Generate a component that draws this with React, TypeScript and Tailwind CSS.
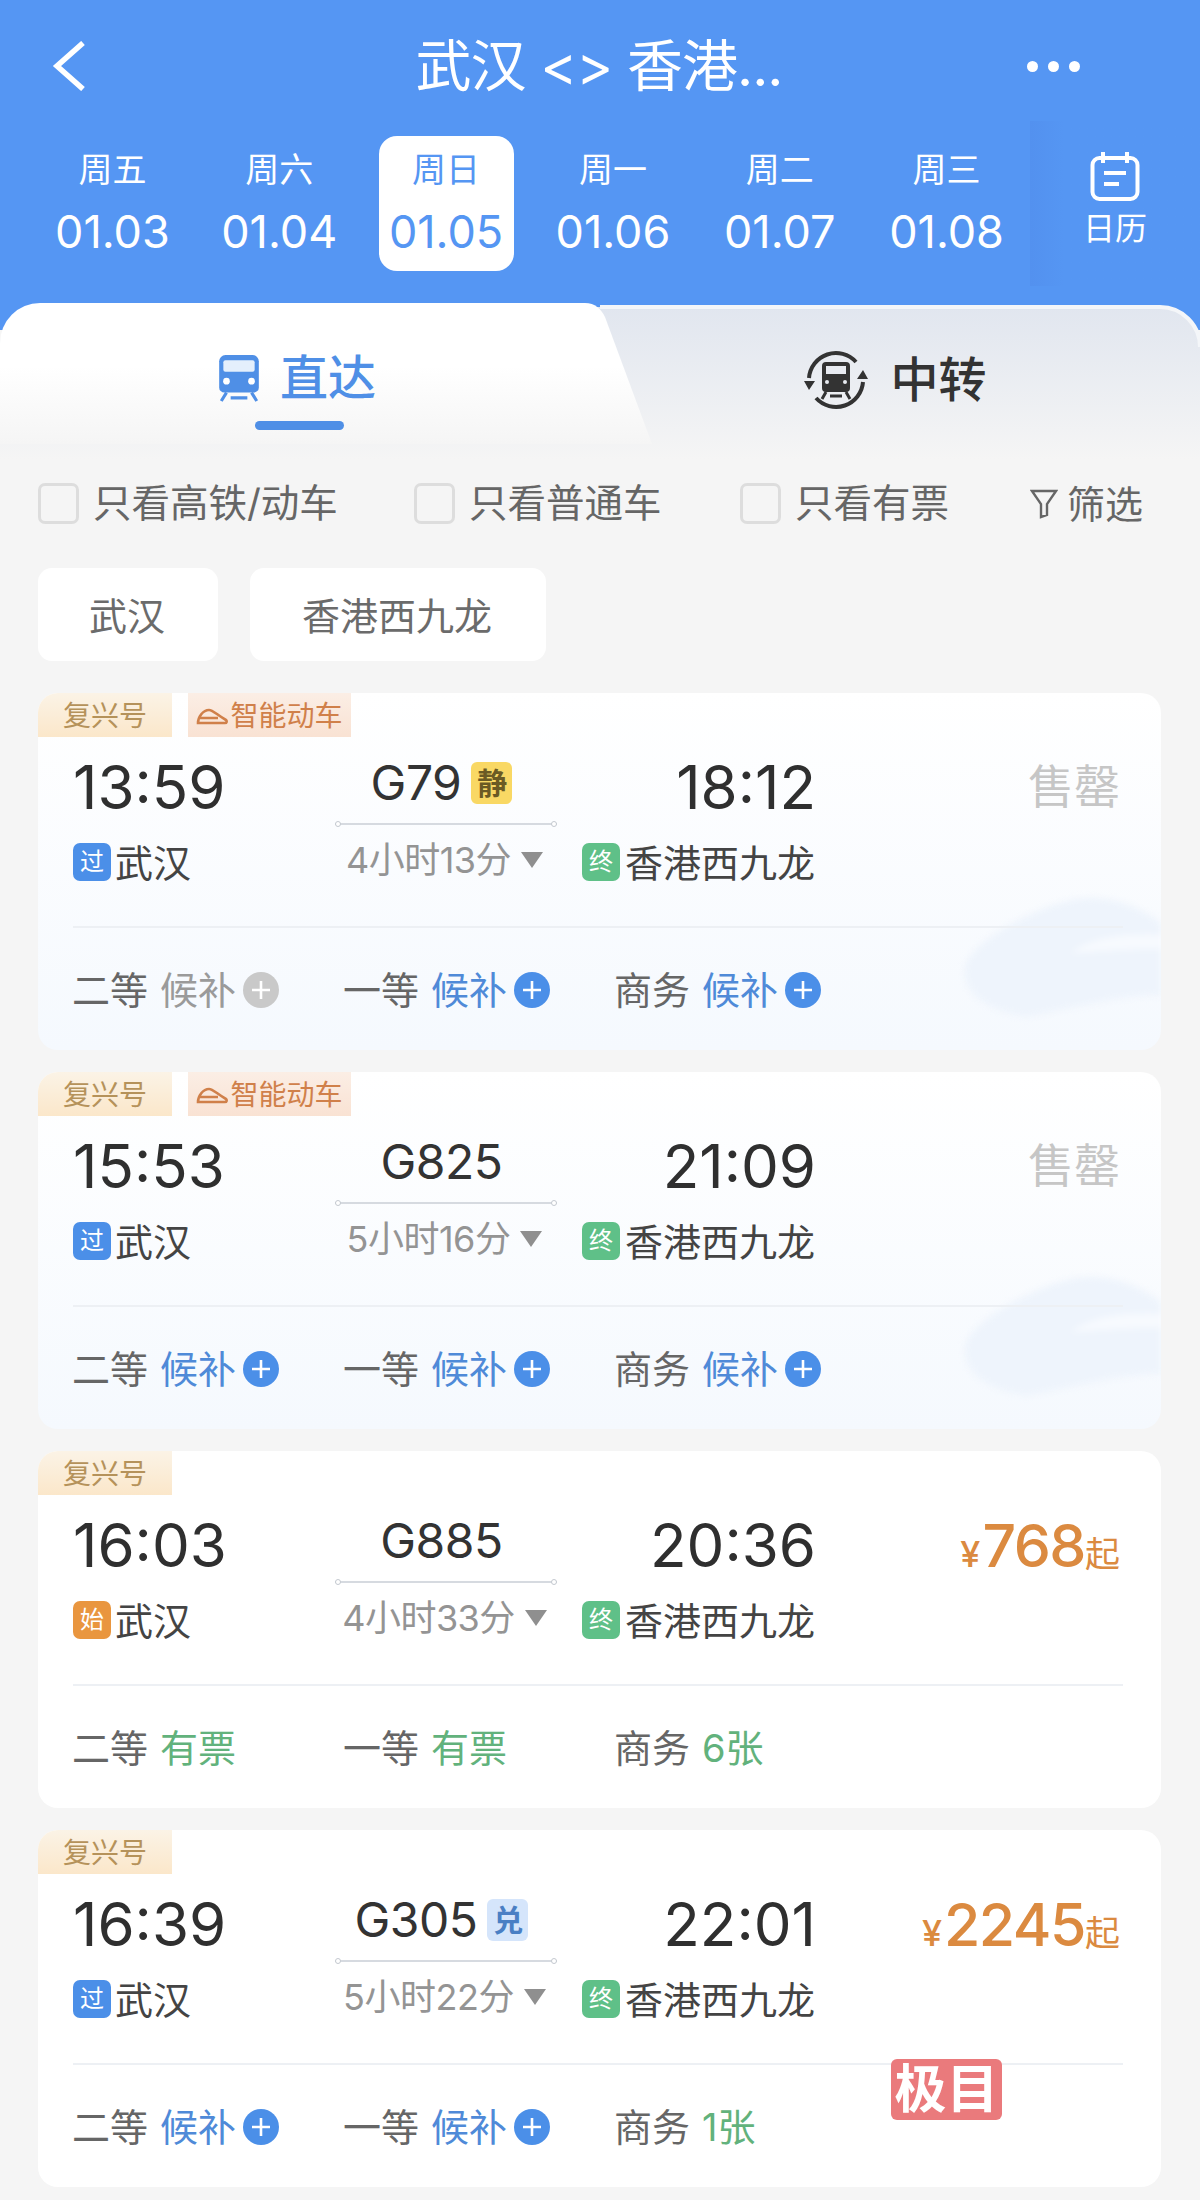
import React from 'react';

type Seat = { name: string; value: string; tone: 'gray' | 'blue' | 'green'; plus?: boolean };

type Train = {
  depart: string;
  arrive: string;
  no: string;
  mark?: string;
  markClass?: string;
  duration: string;
  startLabel: string;
  startClass: string;
  smart?: boolean;
  soldOut?: boolean;
  price?: string;
  seats: Seat[];
};

const days = [
  { week: '周五', date: '01.03' },
  { week: '周六', date: '01.04' },
  { week: '周日', date: '01.05', active: true },
  { week: '周一', date: '01.06' },
  { week: '周二', date: '01.07' },
  { week: '周三', date: '01.08' },
];

const trains: Train[] = [
  {
    depart: '13:59',
    arrive: '18:12',
    no: 'G79',
    mark: '静',
    markClass: 'bg-[#f9d864] text-[#6b5a24]',
    duration: '4小时13分',
    startLabel: '过',
    startClass: 'bg-[#4b8fe8]',
    smart: true,
    soldOut: true,
    seats: [
      { name: '二等', value: '候补', tone: 'gray', plus: true },
      { name: '一等', value: '候补', tone: 'blue', plus: true },
      { name: '商务', value: '候补', tone: 'blue', plus: true },
    ],
  },
  {
    depart: '15:53',
    arrive: '21:09',
    no: 'G825',
    duration: '5小时16分',
    startLabel: '过',
    startClass: 'bg-[#4b8fe8]',
    smart: true,
    soldOut: true,
    seats: [
      { name: '二等', value: '候补', tone: 'blue', plus: true },
      { name: '一等', value: '候补', tone: 'blue', plus: true },
      { name: '商务', value: '候补', tone: 'blue', plus: true },
    ],
  },
  {
    depart: '16:03',
    arrive: '20:36',
    no: 'G885',
    duration: '4小时33分',
    startLabel: '始',
    startClass: 'bg-[#e9963f]',
    price: '768',
    seats: [
      { name: '二等', value: '有票', tone: 'green' },
      { name: '一等', value: '有票', tone: 'green' },
      { name: '商务', value: '6张', tone: 'green' },
    ],
  },
  {
    depart: '16:39',
    arrive: '22:01',
    no: 'G305',
    mark: '兑',
    markClass: 'bg-[#d5e5fb] text-[#4a7fc4]',
    duration: '5小时22分',
    startLabel: '过',
    startClass: 'bg-[#4b8fe8]',
    price: '2245',
    seats: [
      { name: '二等', value: '候补', tone: 'blue', plus: true },
      { name: '一等', value: '候补', tone: 'blue', plus: true },
      { name: '商务', value: '1张', tone: 'green' },
    ],
  },
];

function PlusDot({ gray }: { gray: boolean }) {
  return (
    <svg width="36" height="36" viewBox="0 0 36 36" className="ml-[7px] shrink-0">
      <circle cx="18" cy="18" r="18" fill={gray ? '#c9c9c9' : '#4b8fe8'} />
      <path d="M18 9v18M9 18h18" stroke="#fff" strokeWidth="2.6" />
    </svg>
  );
}

function SeatCell({ seat }: { seat: Seat }) {
  const color =
    seat.tone === 'gray' ? 'text-[#9a9a9a]' : seat.tone === 'blue' ? 'text-[#4f8ad8]' : 'text-[#62b27c]';
  return (
    <div className="flex items-center w-[271px] text-[38px] leading-none">
      <span className="text-[#666666]">{seat.name}</span>
      <span className={`ml-[12px] ${color}`}>{seat.value}</span>
      {seat.plus && <PlusDot gray={seat.tone === 'gray'} />}
    </div>
  );
}

function StopBadge({ label, className }: { label: string; className: string }) {
  return (
    <span
      className={`flex items-center justify-center w-[38px] h-[38px] rounded-[7px] text-[24px] leading-none text-white shrink-0 ${className}`}
    >
      {label}
    </span>
  );
}

function TrainCard({ train }: { train: Train }) {
  return (
    <div
      className={`relative h-[357px] rounded-[20px] overflow-hidden ${
        train.soldOut ? 'bg-gradient-to-b from-white to-[#f5f9fe]' : 'bg-white'
      }`}
    >
      {train.soldOut && (
        <svg
          width="200"
          height="130"
          viewBox="0 0 200 130"
          className="absolute right-0 top-[198px] blur-[3px]"
        >
          <path
            d="M4 75C10 55 60 20 115 8c35-5 65 8 85 24v72c-40 0-90 14-135 22C30 120 0 105 4 75z"
            fill="#eef4fc"
          />
          <path d="M110 62c20-15 50-20 90-18v14c-30 0-60 2-90 4z" fill="#f7fafe" />
        </svg>
      )}
      <div className="relative flex h-[44px] gap-[16px]">
        <div className="flex items-center justify-center w-[134px] pt-[2px] bg-gradient-to-b from-[#fbf3e6] to-[#fbe7ca] text-[28px] leading-none text-[#b5925a]">
          复兴号
        </div>
        {train.smart && (
          <div className="flex items-center justify-center w-[163px] pt-[2px] bg-gradient-to-b from-[#fbeee5] to-[#f9e2d3] text-[28px] leading-none text-[#d0804a]">
            <svg width="32" height="18" viewBox="0 0 32 18" className="mr-[2px]">
              <path d="M2 16c0-6 5-13 11-13 4 0 8 5 17 10 1 1 1 3-1 3H2z" fill="none" stroke="#d0804a" strokeWidth="2.6" />
              <path d="M3 11h19" stroke="#d0804a" strokeWidth="2.6" />
            </svg>
            智能动车
          </div>
        )}
      </div>
      <div className="relative mx-[35px] mr-[38px] h-[191px] flex border-b-2 border-[#edf0f4]">
        <div className="w-[262px]">
          <div className="mt-[20px] h-[60px] text-[60px] leading-[60px] text-[#2f2f2f]">{train.depart}</div>
          <div className="mt-[25px] flex items-center text-[38px] leading-none text-[#444444]">
            <StopBadge label={train.startLabel} className={train.startClass} />
            <span className="ml-[4px] pt-[2px]">武汉</span>
          </div>
        </div>
        <div className="w-[222px]">
          <div className="mt-[23px] h-[46px] flex items-center justify-center pr-[9px] text-[48px] tracking-[-0.5px] leading-none text-[#333333]">
            <span>{train.no}</span>
            {train.mark && (
              <span
                className={`ml-[10px] flex items-center justify-center w-[41px] h-[42px] rounded-[6px] text-[30px] font-bold leading-none ${train.markClass}`}
              >
                {train.mark}
              </span>
            )}
          </div>
          <div className="mt-[17px] relative h-[2px] bg-[#d6dae0]">
            <span className="absolute left-0 top-[-2px] w-[6px] h-[6px] rounded-full border border-[#c4c9d0] bg-white" />
            <span className="absolute right-0 top-[-2px] w-[6px] h-[6px] rounded-full border border-[#c4c9d0] bg-white" />
          </div>
          <div className="mt-[18px] h-[34px] flex items-center justify-center pr-[3px] text-[36px] tracking-[-0.5px] leading-none text-[#949494]">
            <span>{train.duration}</span>
            <svg width="22" height="16" viewBox="0 0 22 16" className="ml-[10px]">
              <path d="M0 0h22L11 16z" fill="#8f8f8f" />
            </svg>
          </div>
        </div>
        <div className="w-[234px] ml-[25px]">
          <div className="mt-[20px] h-[60px] text-right text-[60px] leading-[60px] text-[#2f2f2f]">
            {train.arrive}
          </div>
          <div className="mt-[25px] flex items-center text-[38px] leading-none text-[#444444]">
            <StopBadge label="终" className="bg-[#5fc088]" />
            <span className="ml-[5px] pt-[2px]">香港西九龙</span>
          </div>
        </div>
        <div className="flex-1 flex justify-end pr-[3px]">
          {train.soldOut ? (
            <div className="mt-[26px] h-[46px] text-[46px] leading-none text-[#c6c6c6]">售罄</div>
          ) : (
            <div className="mt-[21px] h-[60px] flex items-baseline text-[#db8a40] leading-none">
              <span className="text-[36px] font-medium mr-[2px]">¥</span>
              <span className="text-[59px] tracking-[-1.5px] font-medium">{train.price}</span>
              <span className="text-[35px]">起</span>
            </div>
          )}
        </div>
      </div>
      <div className="relative flex items-center h-[124px] ml-[34px]">
        {train.seats.map((s) => (
          <SeatCell key={s.name} seat={s} />
        ))}
      </div>
    </div>
  );
}

function FilterCheck({ label, className }: { label: string; className: string }) {
  return (
    <div className={`flex items-center ${className}`}>
      <span className="w-[41px] h-[41px] rounded-[7px] border-[3px] border-[#dddddd] shrink-0" />
      <span className="ml-[14px] text-[38.5px] leading-none text-[#666666]">{label}</span>
    </div>
  );
}

export default function App() {
  return (
    <div className="relative w-[1200px] h-[2200px] overflow-hidden bg-[#f5f5f5] font-['Inter','Noto_Sans_CJK_SC',sans-serif]">
      <div className="bg-[#5596f3] h-[330px] pt-[38px]">
        <div className="flex items-center h-[56px] pl-[52px] pr-[120px]">
          <svg width="34" height="50" viewBox="0 0 34 50">
            <path d="M31 2L5 25l26 23" fill="none" stroke="#fff" strokeWidth="5.5" />
          </svg>
          <div className="flex-1 text-center text-[56px] tracking-[-1px] leading-none text-white pl-[85px]">武汉 &lt;&gt; 香港...</div>
          <div className="flex gap-[10px]">
            <span className="w-[11px] h-[11px] rounded-full bg-white" />
            <span className="w-[11px] h-[11px] rounded-full bg-white" />
            <span className="w-[11px] h-[11px] rounded-full bg-white" />
          </div>
        </div>
        <div className="flex mt-[42px]">
          <div className="grid grid-cols-6 w-[1030px] pl-[29px]">
            {days.map((d) => (
              <div
                key={d.date}
                className={`mx-auto w-[135px] h-[135px] rounded-[18px] flex flex-col items-center ${
                  d.active ? 'bg-white text-[#5596f3]' : 'text-white'
                }`}
              >
                <span className="mt-[17px] text-[34px] leading-none">{d.week}</span>
                <span className="mt-[22px] text-[45px] leading-none">{d.date}</span>
              </div>
            ))}
          </div>
          <div className="flex-1 flex flex-col items-center bg-gradient-to-r from-[#5391ef] to-[#5596f3] to-20% h-[165px] -mt-[15px]">
            <svg width="50" height="50" viewBox="0 0 50 50" className="mt-[31px]">
              <rect x="2.5" y="6" width="45" height="41" rx="7" fill="none" stroke="#fff" strokeWidth="4" />
              <path d="M13 0v11M37 0v11M14 21h22M14 32h15" stroke="#fff" strokeWidth="4" />
            </svg>
            <span className="mt-[11px] text-[32px] leading-none text-white">日历</span>
          </div>
        </div>
      </div>

      <div className="relative -mt-[27px] h-[157px]">
        <svg width="1200" height="157" viewBox="0 0 1200 157" className="absolute inset-0">
          <defs>
            <linearGradient id="restTab" x1="0" y1="0" x2="0" y2="1">
              <stop offset="0" stopColor="#e1e6ef" />
              <stop offset="1" stopColor="#f5f5f5" />
            </linearGradient>
            <linearGradient id="mainTab" x1="0" y1="0" x2="0" y2="1">
              <stop offset="0.45" stopColor="#ffffff" />
              <stop offset="1" stopColor="#f5f5f5" />
            </linearGradient>
          </defs>
          <path d="M0 44a40 40 0 0 1 40-40h1120a40 40 0 0 1 40 40v113H0z" fill="url(#restTab)" />
          <path d="M600 4h560a40 40 0 0 1 40 40" fill="none" stroke="#f4f6f9" strokeWidth="4" />
          <path d="M0 40a40 40 0 0 1 40-40h545c10 0 16 6 20 14l47 127H0z" fill="url(#mainTab)" />
        </svg>
        <div className="relative flex h-full">
          <div className="w-[600px] flex flex-col items-center">
            <div className="flex items-center mt-[50px] h-[50px] text-[48px] font-medium leading-none text-[#4f8fe6] mr-[6px]">
              <svg width="42" height="48" viewBox="0 0 40 46">
                <path d="M7 1h26a6 6 0 0 1 6 6v25a5 5 0 0 1-5 5H6a5 5 0 0 1-5-5V7a6 6 0 0 1 6-6z" fill="#4f8fe6" />
                <rect x="5" y="6" width="30" height="11" rx="2" fill="#e4effc" />
                <circle cx="8" cy="26" r="3.2" fill="#fff" />
                <circle cx="32" cy="26" r="3.2" fill="#fff" />
                <path d="M8 37l-5 8M32 37l5 8M12 42h16" stroke="#4f8fe6" strokeWidth="3" />
              </svg>
              <span className="ml-[20px]">直达</span>
            </div>
            <span className="mt-[18px] ml-[-1px] w-[89px] h-[9px] rounded-full bg-[#4f8fe6]" />
          </div>
          <div className="flex-1 flex justify-center">
            <div className="flex items-center mt-[46px] h-[62px] text-[48px] font-medium leading-none text-[#333333] mr-[9px]">
              <svg width="64" height="62" viewBox="0 0 64 62">
                <path d="M5 29A27 27 0 0 1 52 13" fill="none" stroke="#333" strokeWidth="4" />
                <path d="M59 33A27 27 0 0 1 12 49" fill="none" stroke="#333" strokeWidth="4" />
                <path d="M53 30l6-9 5 9zM0 32l5 9 6-9z" fill="#333" />
                <rect x="18" y="13" width="28" height="30" rx="4" fill="#333" />
                <rect x="22" y="17" width="20" height="8" fill="#e8ebf1" />
                <circle cx="23" cy="33" r="2" fill="#e8ebf1" />
                <circle cx="41" cy="33" r="2" fill="#e8ebf1" />
                <path d="M22 43l-4 7M42 43l4 7M26 47h12" stroke="#333" strokeWidth="3" />
              </svg>
              <span className="ml-[22px]">中转</span>
            </div>
          </div>
        </div>
      </div>

      <div className="flex items-center h-[41px] mt-[23px] pl-[38px]">
        <FilterCheck label="只看高铁/动车" className="w-[376px]" />
        <FilterCheck label="只看普通车" className="w-[326px]" />
        <FilterCheck label="只看有票" className="w-[290px]" />
        <svg width="28" height="30" viewBox="0 0 28 30">
          <path d="M2 2h24l-9 13v11l-6 2V15z" fill="none" stroke="#666" strokeWidth="2.4" />
        </svg>
        <span className="ml-[9px] text-[38px] leading-none text-[#666666]">筛选</span>
      </div>

      <div className="flex gap-[32px] mt-[44px] ml-[38px]">
        <div className="flex items-center justify-center w-[180px] h-[93px] pt-[3px] pr-[2px] rounded-[14px] bg-white text-[38px] leading-none text-[#6b6b6b]">
          武汉
        </div>
        <div className="flex items-center justify-center w-[296px] h-[93px] pt-[3px] pr-[2px] rounded-[14px] bg-white text-[38px] leading-none text-[#6b6b6b]">
          香港西九龙
        </div>
      </div>

      <div className="flex flex-col gap-[22px] mt-[32px] mx-[38px] w-[1123px]">
        {trains.map((t) => (
          <TrainCard key={t.no} train={t} />
        ))}
      </div>

      <div className="absolute left-[891px] top-[2059px] flex items-center justify-center w-[111px] h-[61px] rounded-[6px] bg-[#ea7a7c] text-[52px] font-bold leading-none text-white">
        极目
      </div>
    </div>
  );
}
